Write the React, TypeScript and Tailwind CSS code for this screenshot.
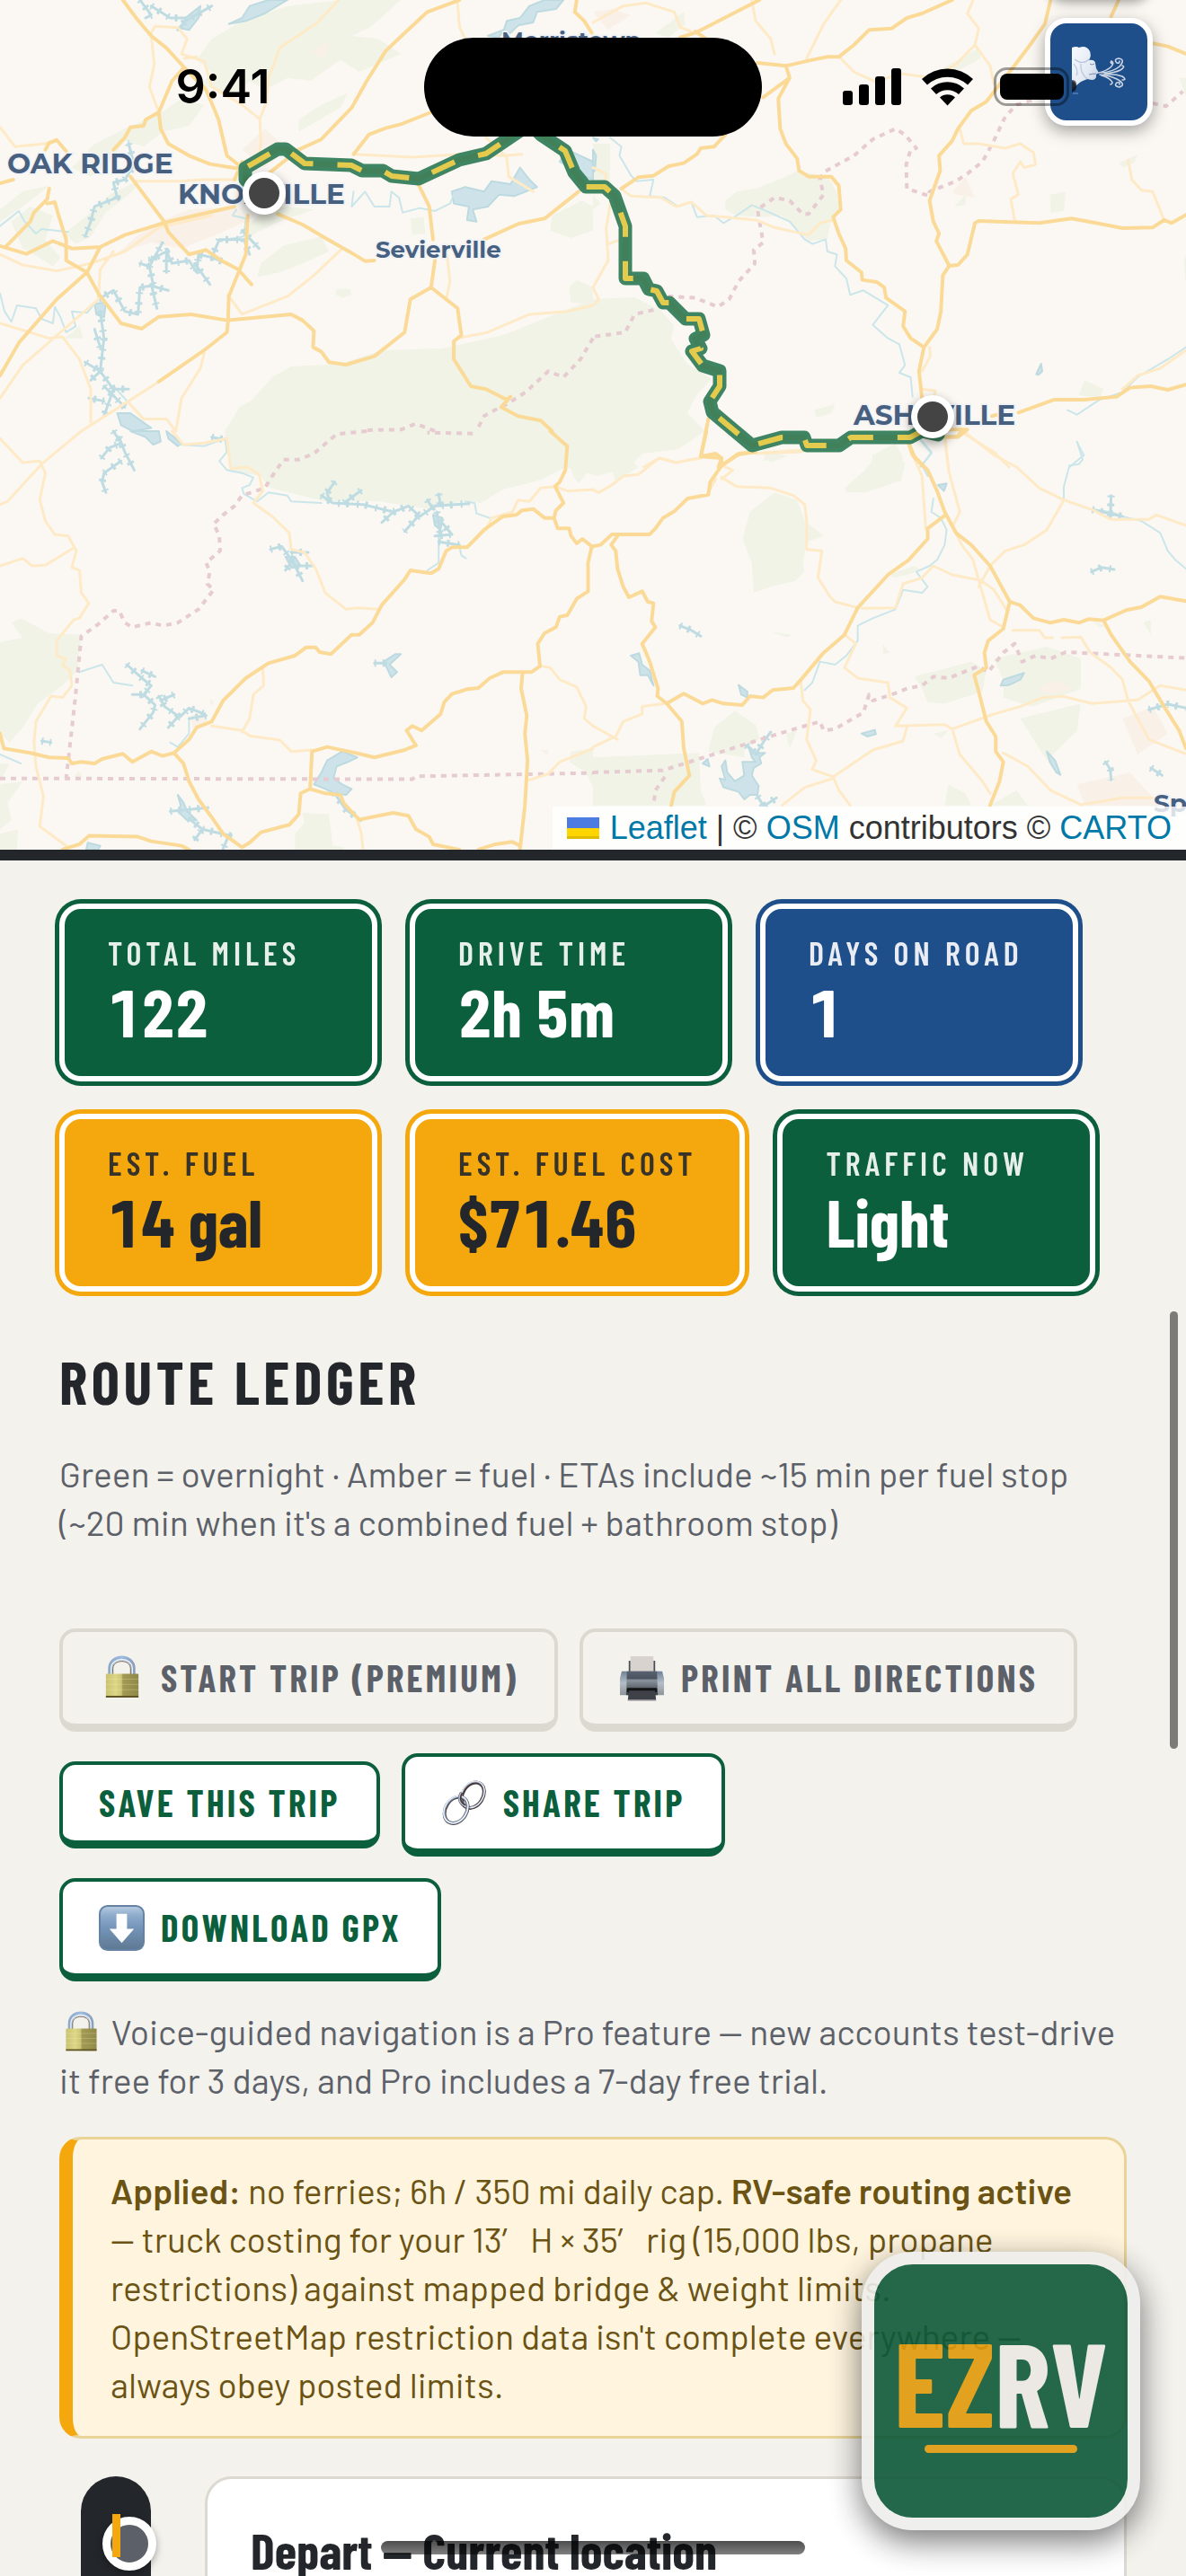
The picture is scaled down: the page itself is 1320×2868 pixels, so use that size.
import React from 'react';
import type { ReactNode } from 'react';

/* ---------- Map ---------- */

type Sheet = {
  at: string;
  parks: string;
  towns?: string;
  lakes: string;
  rivers: string;
  inlets: string;
  minor: string;
  major: string;
  border: string;
};

const NW: Sheet = {
  at: 'scale(0.4209 0.3333)',
  parks:
    'M560,130 L640,70 760,20 900,0 1060,0 980,90 930,120 1000,130 1060,180 950,240 900,200 820,270 760,260 700,300 660,270 620,330 560,290 500,330 560,240 520,200Z M190,560 L250,480 330,430 420,380 480,330 540,350 500,420 430,440 380,490 330,470 290,540 240,590Z M30,740 L80,690 140,720 120,800 160,860 140,890 90,850 60,830Z M170,780 L230,720 290,650 370,600 350,640 280,710 240,790 200,815Z M650,760 L700,700 760,690 830,700 720,750 660,790Z M690,880 L750,820 850,790 870,840 800,880 740,910 680,925Z M1460,720 L1540,670 1568,690 1568,770 1510,795 1455,770Z M890,965 L925,965 930,985 905,995 888,985Z M1505,960 L1525,935 1568,960 1568,1015 1510,1010Z M1085,730 L1120,725 1125,780 1090,785Z M790,400 L850,350 920,310 900,360 830,410 790,440Z M0,700 L60,640 130,620 60,690 0,740Z M170,1130 L210,1090 220,1130Z',
  towns:
    'M420,740 L500,700 620,690 650,740 560,790 480,830 400,810 350,830 300,860 360,790Z M640,500 L700,430 760,500 700,560Z M820,170 L870,140 860,200Z',
  lakes:
    'M1195,640 L1230,625 1280,640 1300,605 1350,615 1375,560 1400,600 1420,625 1360,655 1320,650 1290,690 1250,700 1260,740 1235,735 1240,690 1200,680Z M1330,110 L1340,70 1375,60 1400,20 1440,0 1490,0 1470,30 1420,40 1410,75 1370,85 1350,110Z M1480,540 L1500,500 1568,540 1568,600 1540,585Z M1290,120 L1330,100 1320,125Z M640,60 L660,20 710,0 760,0 700,45 650,70 605,80Z M490,60 L530,20 525,60 500,100 480,95Z M310,1380 L345,1380 400,1430 350,1440 320,1420Z M250,1015 L280,1010 275,1060 255,1050Z',
  rivers:
    'M0,980 L12,1040 30,1075 45,1020 95,1030 110,1065 140,1080 145,1025 160,1060 175,1110 200,1090 190,1040 230,1045 260,1000 M935,640 L930,690 965,640 990,690 1030,690 1035,640 1055,660 1065,710 1110,695 1150,705 1190,680 1200,650 M0,755 L50,705 65,740 95,780 110,765 180,775 M600,800 L645,790 650,730 615,720 625,700 M340,470 L345,510 M340,1345 L300,1290',
  inlets:
    'M260,1000 L300,970 330,1040 365,1050 370,960 400,955 445,970 M400,950 L415,1030 M405,950 L395,890 370,880 M395,890 L430,810 M395,870 L440,840 455,880 500,870 520,910 525,850 560,860 580,800 640,800 M440,840 L440,910 M560,860 L600,880 M515,880 L555,950 M265,1040 L275,1130 265,1240 225,1210 M265,1240 L240,1270 M265,1160 L250,1100 M265,1240 L300,1300 275,1390 M300,1300 L340,1300 M275,1340 L235,1330 M275,1290 L330,1360 M340,480 L355,550 330,600 300,610 310,660 250,690 240,740 225,790 M370,0 L400,50 385,60 M400,20 L450,60 490,60 M470,100 L490,70 560,20 M640,770 L685,830 M645,800 L660,850',
  minor:
    'M400,110 L410,88 470,92 495,130 480,180 540,205 560,290 640,350 687,398 690,480 680,540 M400,120 L408,215 395,290 420,375 M895,0 L840,75 740,160 710,260 705,340 687,398 M0,425 L40,490 120,480 150,465 M360,605 L470,605 540,600 625,600 M935,515 L1090,525 1230,515 1330,520 1380,515 M0,850 L60,885 150,905 240,880 330,840 420,760 560,720 M0,1330 L60,1220 160,1110 260,1000 265,900 300,840 M0,1080 L130,1130 165,1125 210,1200 240,1300 240,1410 M215,1440 L340,1340 420,1275 M905,830 L830,920 760,990 640,1050 603,985 M540,1180 L530,1230 480,1330 465,1440 M340,1345 L380,1400 440,1400 465,1440 M1210,1130 L1290,1110 1400,1050 1500,1040 1568,1020 M1180,830 L1190,940 1180,1000 M1210,10 L1215,90 1230,130 M1285,460 L1340,525 1345,590 1410,640 M487,195 L520,190',
  major:
    'M325,0 L360,60 400,120 440,160 487,225 545,300 565,360 578,400 600,520 640,560 M487,225 L455,270 420,375 385,400 380,420 345,425 330,460 300,500 M420,375 L425,430 445,480 500,520 555,548 640,565 M1215,0 L1130,40 1070,110 1020,170 970,270 930,360 850,465 790,500 M1140,375 L1060,415 1020,428 975,450 935,515 M0,822 L70,848 140,805 190,830 265,825 330,785 440,742 620,690 M0,1255 L50,1145 150,1000 230,910 265,825 M120,500 L130,478 150,468 175,505 M0,612 L35,600 M80,740 L15,825 M130,630 L125,665 90,710 80,740 M125,680 L145,675 155,720 175,800 175,870 230,910 260,980 320,1080 375,1098 420,1058 505,1050 600,1070 770,1050 800,1070 830,1105 828,1160 850,1175 870,1210 915,1218 990,1190 1070,1110 1085,1000 1140,960 1150,870 M1108,620 L1135,690 1145,800 M1140,960 L1210,1030 1220,1120 1200,1140 1200,1200 1245,1290 1285,1300 1340,1335 1350,1325 1325,1360 1370,1390 1430,1405 1460,1440 M345,590 L435,742 445,775 500,850 545,835 585,870 630,900 665,950 M655,720 L650,850 605,990 603,1075 600,1110 540,1170 420,1275 M735,715 L800,750 860,795 930,845 965,872 990,870 M1280,800 L1370,748 1440,730 1530,640 M1525,0 L1520,40 1545,70 1565,110 M640,540 L620,600 M700,590 L790,500',
  border:
    'M1568,1130 L1535,1200 1490,1260 1450,1240 1390,1310 1340,1350 1300,1375 1280,1390 1260,1440 M1150,1440 L1100,1415 1060,1435 960,1437',
};

const NE: Sheet = {
  at: 'translate(660 0) scale(0.4209 0.3333)',
  parks:
    'M350,700 L350,670 380,640 430,630 510,590 540,570 620,590 645,640 650,700 630,730 620,800 570,805 540,770 500,720 440,725 380,720Z M950,210 L1020,160 1025,195 960,240 900,245Z M165,110 L240,40 245,80 200,125Z M1210,650 L1250,640 1245,705 1210,710Z M955,690 L985,650 985,685Z M585,1370 L640,1350 630,1380 590,1395Z M1285,1320 L1300,1270 1350,1300 1340,1330Z M0,480 L45,480 45,610 0,600Z M1390,545 L1440,515 1430,545 1400,560Z M450,1540 L460,1505 515,1525Z M735,1560 L740,1520 800,1480 820,1530 810,1560Z M1562,880 L1568,850 1568,950Z M1550,260 L1568,260 1568,320Z M0,650 L20,680 0,700Z',
  towns: 'M950,640 L985,590 1010,660 960,650Z M0,40 L50,30 100,50 40,100Z',
  lakes: 'M1172,1250 L1185,1215 1188,1240 1178,1252Z M0,500 L8,520 5,570 0,575Z M0,460 L14,465 8,472Z',
  rivers:
    'M45,460 L75,490 70,520 100,585 115,605 160,600 150,655 190,660 225,690 260,675 275,725 320,720 345,745 380,720 420,685 450,700 485,720 520,740 560,800 580,815 615,800 620,840 645,850 640,890 670,930 680,985 715,970 780,1020 740,1085 780,1130 810,1150 825,1220 810,1245 840,1260 845,1325 M1568,1160 L1520,1200 1500,1215 1440,1260 1400,1310 1340,1335 1280,1385 1255,1370 M1280,1478 L1298,1520 1260,1560 M865,1470 L895,1515 865,1560',
  inlets: '',
  minor:
    'M0,75 L80,20 140,10 215,40 230,90 260,105 M420,0 L430,70 470,130 480,180 M655,0 L610,80 565,195 M655,195 L690,240 750,275 810,245 900,260 960,215 1010,150 1020,95 990,45 1005,0 M1010,150 L1050,220 1060,280 M970,430 L980,480 1020,480 1090,495 1130,480 1165,510 1170,550 1140,560 1130,540 1110,580 1125,650 1105,665 1115,735 M1415,535 L1425,600 1450,635 1480,640 1510,735 M75,630 L100,655 180,660 220,690 260,675 300,720 350,725 430,735 480,760 570,785 600,745 635,735 M50,650 L35,760 40,870 0,960 L15,1000 5,1015 M40,815 L75,800 M870,1300 L905,1305 900,1350 M890,1160 L892,1190 870,1240 M1400,1300 L1440,1255 1500,1230 1568,1170 M135,1560 L175,1530 220,1545 280,1530 M450,1512 L540,1505 600,1495 M0,560 L35,580 30,620 M930,1470 L940,1560 M970,1440 L1060,1510 1100,1560',
  major:
    'M440,0 L270,110 230,125 M270,105 L300,130 M435,210 L510,220 580,200 620,190 650,190 690,150 730,100 790,95 830,60 870,45 950,0 M510,220 L520,260 490,330 495,430 510,480 540,530 545,570 570,590 630,590 650,620 655,700 635,725 650,780 668,830 670,870 710,910 712,935 750,942 770,960 775,995 825,1040 820,1090 840,1130 875,1160 M520,260 L450,325 M350,450 L320,490 285,495 275,515 240,545 200,555 160,587 120,592 75,630 M1210,0 L1195,80 1150,160 1120,210 1070,290 1040,340 1000,370 965,430 950,470 915,520 918,570 890,670 900,740 915,780 908,805 942,888 925,920 920,1040 910,1100 875,1160 862,1240 870,1330 M942,888 L965,885 990,850 1010,745 1020,738 1180,745 1265,730 1330,745 1400,762 1480,760 1510,735 1530,745 1568,718 M1480,145 L1520,155 1568,180 M1390,0 L1370,55 M1125,1378 L1220,1335 1300,1335 1385,1325 1420,1295 1475,1290 1520,1302 1568,1285 M835,1480 L845,1520 875,1560 M305,1400 L285,1525 340,1530 332,1560 M425,1510 L385,1518 340,1555 M940,1435 L990,1435 965,1460 930,1460 M1055,1390 L1070,1385',
  border:
    'M1160,335 L1120,350 1090,390 1060,470 1030,540 990,580 960,605 890,640 890,655 830,630 828,550 840,500 855,495 825,450 800,430 740,465 690,520 610,575 600,600 610,650 570,715 555,715 520,670 480,660 435,700 450,810 425,835 428,880 385,940 360,1000 330,1025 270,995 200,990 M160,1035 L110,1050 85,1110 0,1125 M1480,345 L1515,355 1560,305',
};

const SW: Sheet = {
  at: 'translate(0 480) scale(0.4209 0.3333)',
  parks:
    'M0,705 L60,690 30,640 55,625 130,675 215,680 205,800 165,850 100,910 60,990 25,1040 0,1010Z M780,1398 L780,1345 805,1310 800,1275 870,1280 880,1385 910,1390 910,1398Z M1510,1070 L1568,1060 1568,1190 1550,1140 1505,1105Z M0,1180 L60,1170 20,1240 30,1300 0,1330Z M0,1345 L48,1330 45,1398 0,1398Z M195,1155 L208,1135 218,1155Z M1500,80 L1540,100 1568,0 1568,115 1530,175 1515,150Z M0,1110 L25,1110 0,1170Z',
  towns: 'M505,950 L540,940 550,975 510,1000Z M555,895 L565,900 562,915 555,912Z M1430,1065 L1450,1065 1450,1085Z',
  lakes:
    'M905,1070 L945,1090 920,1105 890,1120 882,1160 905,1180 930,1195 915,1215 885,1210 860,1195 830,1180 850,1140 865,1100 885,1085Z M345,0 L420,0 425,35 405,45 385,20Z M470,1215 L485,1240 495,1270 520,1300 495,1300 470,1270 478,1250Z M440,0 L480,40 470,50 445,25Z M228,1398 L232,1375 265,1385 260,1398Z M755,420 L780,420 795,450 770,455Z M1145,280 L1170,290 1165,330 1150,315Z M1015,770 L1045,745 1060,745 1030,780 1050,805 1035,822Z',
  rivers:
    'M475,45 L540,50 595,25 600,70 580,100 600,130 640,140 670,155 660,180 640,190 645,210 680,235 710,205 760,215 770,235 850,240 M1160,340 L1160,440 1130,465 M1230,235 L1255,240 1260,275 1295,290 M1215,385 L1220,415 1232,425 M210,805 L270,780 290,820 300,840 350,850 M500,960 L500,1010 470,1055 450,1040 M0,1080 L55,1110',
  inlets:
    'M300,0 L320,40 290,55 268,90 M315,20 L330,70 355,130 M320,100 L275,140 270,170 280,205 M850,215 L880,240 960,245 1040,270 1080,250 1110,285 1150,250 1240,242 M870,230 L865,205 885,170 M910,240 L955,198 M1160,210 L1165,250 M1130,230 L1145,260 M1040,270 L1010,305 M1105,285 L1070,335 M1155,270 L1165,350 M1160,370 L1215,380 M1165,300 L1195,345 1150,350 M715,395 L745,385 765,420 780,450 830,450 M775,430 L755,465 M780,450 L800,500 M770,405 L815,405 M990,775 L1022,775 M335,780 L375,825 400,850 380,880 350,880 M375,800 L410,820 M380,880 L410,915 405,940 370,995 M420,885 L435,920 475,955 500,925 540,945 M460,880 L425,900 M470,955 L445,990 M545,950 L500,960 M110,1035 L135,1040 M500,1295 L535,1330 515,1365 M450,1270 L550,1258 M535,1330 L605,1350 590,1395 M885,1210 L915,1265 955,1300 M560,20 L600,30',
  minor:
    'M215,0 L110,110 20,235 0,245 M0,25 L60,105 105,100 120,140 105,230 120,300 145,345 180,350 202,400 190,455 210,465 215,540 235,575 210,625 195,630 150,700 150,750 175,760 165,780 185,800 190,850 165,890 135,885 95,970 90,1040 95,1120 115,1220 105,1320 180,1390 M0,450 L60,425 85,450 120,448 195,390 M455,0 L485,45 540,40 600,25 610,125 655,120 685,145 695,200 670,240 720,285 765,340 770,395 805,405 835,460 860,540 915,595 945,590 1000,595 M695,790 L697,850 670,880 660,960 640,1005 M560,985 L640,1000 660,1018 740,1032 770,1070 825,1065 M1568,195 L1500,200 1470,185 1430,190 1400,235 1370,230 1355,270 1300,290 1285,330 M1430,785 L1455,790 1480,830 1525,855 1550,920 1545,960 1568,985 M1400,1165 L1450,1145 1480,1105 1568,1060 M945,1300 L955,1340 960,1398',
  major:
    'M1455,0 L1500,50 1495,130 1480,170 1468,185 1490,240 1470,265 1465,290 M460,1075 L500,1030 520,990 560,970 590,900 650,825 710,775 780,750 810,722 835,722 845,738 875,745 930,680 950,680 985,640 1010,580 1070,495 1085,465 1140,475 1160,460 1180,400 1195,388 1235,388 1280,330 1330,285 1365,280 1380,265 1410,260 1440,290 1465,290 1475,325 1505,325 1510,350 1525,375 1540,360 1565,385 1555,440 1555,535 1525,560 1500,615 1480,620 1470,655 1440,675 1422,710 1428,785 1405,805 1330,805 1295,825 1265,858 1235,862 1195,878 1175,905 1165,945 1115,1000 1090,985 1075,1000 1100,1050 1070,1065 990,1090 940,1075 865,1055 825,1070 820,1195 860,1210 900,1215 910,1245 950,1298 1000,1285 1040,1275 1080,1285 1100,1330 1135,1355 1145,1380 1215,1398 M0,1010 L10,1060 80,1075 130,1090 180,1092 190,1110 215,1105 250,1110 270,1095 325,1078 350,1105 400,1070 430,1085 460,1075 485,1110 500,1170 525,1230 560,1290 590,1345 640,1390 660,1375 690,1340 765,1315 790,1280 795,1210 820,1195 M165,1398 L210,1380 235,1352 365,1355 400,1370 480,1385 500,1398 M1382,805 L1378,860 1393,950 1388,1010 1395,1100 1388,1250 1375,1398 M1265,1398 L1310,1380 1355,1372 1375,1385',
  border:
    'M1250,8 L1130,5 M970,0 L890,10 830,75 790,95 750,95 720,150 700,190 640,215 620,250 590,280 565,310 580,350 582,400 545,440 555,470 548,510 565,530 525,595 470,640 430,650 400,640 350,655 330,640 315,600 300,600 260,645 215,685 200,880 185,1050 175,1160 M0,1160 L1090,1163 1100,1153 1568,1142',
};

const SE: Sheet = {
  at: 'translate(660 480) scale(0.4209 0.3333)',
  parks:
    'M0,20 L130,0 130,50 90,80 120,120 60,170 50,130 0,140Z M665,190 L720,130 740,95 800,65 825,110 815,165 720,205 670,205Z M395,360 L415,270 480,205 540,230 560,300 612,350 565,370 555,440 558,470 535,500 470,520 425,540 420,440Z M850,820 L1000,770 1040,800 1030,870 930,910 885,905 870,860Z M1060,760 L1200,720 1290,760 1290,860 1240,885 1160,920 1085,890 1085,830Z M305,1070 L320,990 375,935 430,980 440,1030 400,1060 400,1090Z M0,1090 L85,1085 280,1075 285,1200 300,1250 0,1250Z M780,480 L850,450 870,465 800,490Z M510,1010 L540,1000 520,1060Z M930,1250 L940,1180 985,1210 1000,1250Z M1050,1250 L1120,1200 1150,1250Z M1455,640 L1475,630 1475,680Z M765,710 L785,740 768,745Z M470,670 L525,680 515,690Z M450,80 L510,85 470,105Z M1130,960 L1290,910 1280,1000 1200,1100 1150,1000Z M900,1010 L940,1000 920,1025Z M1320,635 L1370,655 1340,655Z',
  towns: 'M1180,860 L1220,830 1270,860 1200,880Z M1400,960 L1480,920 1520,1010 1440,1080Z M1280,1180 L1420,1140 1500,1250 1300,1250Z',
  lakes:
    'M400,1150 L395,1105 430,1105 420,1090 410,1050 430,1075 455,1075 440,1090 445,1110 425,1125 420,1150 438,1185 435,1215 415,1215 400,1230 385,1205 345,1190 335,1160 350,1165 340,1120 350,1100 355,1140 375,1170Z M1078,850 L1085,830 1140,808 1130,830 1100,848Z M1200,1070 L1222,1100 1236,1148 1225,1140 1208,1105Z M710,1010 L745,998 748,1012 725,1020Z M290,1110 L303,1095 308,1120Z M100,750 L122,742 130,780 150,800 160,850 145,815 125,815 120,770Z M385,848 L408,870 408,890 392,880Z M912,180 L935,175 928,200Z',
  rivers:
    'M865,25 L895,70 870,115 885,150 M900,225 L895,270 920,290 935,330 930,380 910,430 890,450 855,470 885,520 870,540 820,530 800,595 740,625 715,640 700,650 700,700 670,750 640,780 600,770 580,840 560,865 M1280,35 L1295,95 1285,110 1260,115 1245,185 1245,230 1310,260 1370,270 1400,285 1450,300 1475,320 1500,340 1520,400 1540,430 1568,460',
  inlets:
    'M1370,215 L1368,290 M1320,262 L1400,285 M230,650 L260,665 285,685 M430,1080 L450,1040 470,1005 M405,1050 L430,1075 M435,1220 L450,1250 M455,1250 L485,1225 M1355,1105 L1368,1130 1370,1165 M1475,1125 L1505,1150 M1470,930 L1520,912 1568,925 M1318,470 L1345,455 1378,462',
  minor:
    'M0,195 L15,205 50,180 80,150 120,145 175,90 220,105 285,90 M430,75 L540,70 620,55 M340,155 L380,185 470,190 530,215 560,245 565,300 565,395 605,400 595,490 625,550 640,570 700,590 M340,115 L370,130 340,160 M835,50 L870,150 880,325 M930,0 L940,130 970,270 950,320 975,380 1005,430 1025,520 1050,630 1085,655 M1110,665 L1180,665 1195,690 1215,690 M1240,690 L1290,688 1315,740 1370,790 1400,830 1415,900 1440,960 1470,1030 1568,1078 M980,0 L1060,80 1120,120 1180,190 1245,230 1200,330 1140,380 1090,400 1050,450 1020,520 M1245,230 L1320,262 1370,295 1470,295 1490,280 1568,315 M900,450 L950,480 1025,498 1060,530 1095,600 M900,450 L870,490 820,510 800,590 710,592 M665,680 L695,710 665,790 700,825 780,840 785,890 830,925 800,985 930,980 950,995 1060,945 1130,920 1190,890 1240,885 1320,910 1440,898 1500,850 1568,865 M550,840 L555,900 575,930 565,1030 590,1100 580,1130 635,1155 650,1200 680,1250 M635,1155 L740,1065 820,1035 830,990 M635,1160 L560,1190 500,1250 M950,995 L970,1080 1030,1170 1050,1210 M1085,1075 L1150,1120 1210,1200 1290,1248 1400,1225 1480,1225 M0,1055 L60,1020 80,970 130,945 130,920 190,910 M0,985 L65,1030 M325,160 L300,215',
  major:
    'M0,385 L20,380 50,345 150,345 165,325 185,290 215,268 250,225 305,212 310,170 340,115 385,75 430,70 M300,0 L285,85 325,75 340,90 340,115 M65,350 L48,380 60,400 65,460 80,520 95,555 130,535 145,570 160,575 155,635 165,655 130,710 150,770 172,860 170,885 195,910 235,970 240,1060 255,1150 215,1205 207,1250 M195,910 L240,877 290,910 315,898 345,910 395,915 415,885 450,890 475,865 530,858 550,830 610,740 665,680 700,590 780,480 835,430 885,360 885,325 932,280 M835,40 L850,85 885,130 910,200 930,270 960,340 1000,380 1050,450 1102,570 1130,582 1165,625 1210,640 1245,630 1285,640 1310,628 1350,632 1385,612 1410,598 1450,588 1500,553 1568,568 M1102,570 L1085,660 1045,700 1035,740 1040,790 1008,815 1020,870 1040,970 1065,1020 1065,1070 1085,1105 1075,1170 1050,1250 M1350,632 L1370,680 1420,770 1470,835 1510,920 1550,1000 1568,1060 M975,0 L965,18 940,20',
  border:
    'M0,1140 L185,1133 480,1015 600,970 610,1000 640,995 715,940 730,880 740,900 790,880 830,860 870,850 900,820 940,825 1020,785 1045,805 1085,740 1115,710 1135,770 1170,750 1210,760 1250,738 1568,758 M190,1155 L165,1200 160,1250',
};

const SHEETS = [NW, NE, SW, SE];

const FOREST =
  'M250,480 267,453 280,446 303,420 324,408 379,405 425,390 492,388 560,373 660,333 706,331 735,345 750,362 747,378 765,405 792,422 775,440 765,460 785,480 755,500 715,505 700,520 665,530 630,520 600,535 560,545 535,560 520,557 480,567 420,558 360,558 300,543 290,530 258,525 252,500Z';

const ROUTE =
  'M286,210 L273,200 273,187 309,166 318,166 339,182 391,184 403,190 426,190 436,196 466,199 511,178 541,171 572,150 590,138 602,150 629,168 639,192 652,208 673,208 684,218 696,252 696,310 716,310 722,322 731,324 738,337 745,337 763,355 778,355 783,373 774,377 780,388 770,391 782,407 801,413 801,430 790,447 793,459 837,496 870,487 895,487 898,496 934,496 947,487 1013,487 1026,480 1044,484';

function Stop({ x, y }: { x: number; y: number }) {
  return (
    <g>
      <circle cx={x} cy={y + 5} r="25" fill="#000" opacity="0.35" filter="url(#soft)" />
      <circle cx={x} cy={y} r="24" fill="#fff" />
      <circle cx={x} cy={y} r="17" fill="#444" />
    </g>
  );
}

function Place({ x, y, size, children }: { x: number; y: number; size: number; children: string }) {
  return (
    <text
      x={x}
      y={y}
      fontSize={size}
      fontWeight="700"
      fill="#47607f"
      stroke="#eef1f6"
      strokeWidth="3"
      paintOrder="stroke"
      className="font-['Montserrat','Open_Sans',sans-serif]"
    >
      {children}
    </text>
  );
}

function RouteMap() {
  return (
    <svg viewBox="0 0 1320 946" className="block h-auto w-full bg-[#fbf8f3]" role="img" aria-label="Route map from Knoxville to Asheville">
      <defs>
        <filter id="soft" x="-50%" y="-50%" width="200%" height="200%">
          <feGaussianBlur stdDeviation="6" />
        </filter>
      </defs>
      <path d={FOREST} fill="#f0f3e6" />
      {SHEETS.map((s) => (
        <g key={s.at} transform={s.at}>
          <path d={s.parks} fill="#f0f3e6" />
          {s.towns && <path d={s.towns} fill="#f9f0e8" />}
        </g>
      ))}
      <g fill="none" strokeLinejoin="round" strokeLinecap="round">
        {SHEETS.map((s) => (
          <g key={s.at} transform={s.at}>
            <path d={s.lakes} fill="#cde3e9" stroke="#bddae0" strokeWidth="2" vectorEffect="non-scaling-stroke" />
            <path d={s.rivers} stroke="#cbe6ea" strokeWidth="2" vectorEffect="non-scaling-stroke" />
            <path d={s.inlets} stroke="#bfdce2" strokeWidth="3" vectorEffect="non-scaling-stroke" />
            <path d={s.inlets} stroke="#bfdce2" strokeWidth="8" strokeDasharray="2 7 3 9" strokeLinecap="butt" vectorEffect="non-scaling-stroke" />
          </g>
        ))}
        {SHEETS.map((s) => (
          <path key={s.at} transform={s.at} d={s.border} stroke="#e6cbd1" strokeWidth="4" strokeDasharray="6 6" strokeLinecap="butt" vectorEffect="non-scaling-stroke" />
        ))}
        {SHEETS.map((s) => (
          <path key={s.at} transform={s.at} d={s.minor} stroke="#feeac6" strokeWidth="3" vectorEffect="non-scaling-stroke" />
        ))}
        {SHEETS.map((s) => (
          <path key={s.at} transform={s.at} d={s.major} stroke="#fbda97" strokeWidth="4" vectorEffect="non-scaling-stroke" />
        ))}
      </g>
      <Place x={558} y={54} size={26}>Morristown</Place>
      <Place x={8} y={193} size={31}>OAK RIDGE</Place>
      <Place x={198} y={227} size={31}>KNOXVILLE</Place>
      <Place x={418} y={287} size={26}>Sevierville</Place>
      <Place x={950} y={473} size={31}>ASHEVILLE</Place>
      <Place x={1284} y={904} size={28}>Sp</Place>
      <g fill="none" strokeLinejoin="round">
        <path d={ROUTE} stroke="#3f8563" strokeWidth="15" strokeLinecap="round" />
        <path d={ROUTE} stroke="#418058" strokeWidth="6" />
        <path d={ROUTE} stroke="#e5cb4d" strokeWidth="6" strokeDasharray="28 27" strokeDashoffset="22" />
      </g>
      <Stop x={294} y={215} />
      <Stop x={1038} y={464} />
    </svg>
  );
}

/* ---------- Icons ---------- */

function LockIcon({ className }: { className: string }) {
  return (
    <svg viewBox="0 0 52 52" className={className} aria-hidden="true">
      <defs>
        <linearGradient id="brass" x1="0" x2="1" y1="0" y2="0">
          <stop offset="0" stopColor="#c9c272" />
          <stop offset="0.3" stopColor="#dcd688" />
          <stop offset="0.48" stopColor="#cbc474" />
          <stop offset="0.52" stopColor="#a39a55" />
          <stop offset="1" stopColor="#8f8848" />
        </linearGradient>
        <linearGradient id="steel" x1="0" x2="1" y1="0" y2="0">
          <stop offset="0" stopColor="#8fa9c8" />
          <stop offset="0.5" stopColor="#9bbbe0" />
          <stop offset="1" stopColor="#8aa0bd" />
        </linearGradient>
      </defs>
      <path d="M13,26 V15 C13,-1 39,-1 39,15 V26" fill="none" stroke="url(#steel)" strokeWidth="5" />
      <path d="M14,25 V15 C14,1 38,1 38,15 V25" fill="none" stroke="#e9f1fb" strokeWidth="1.5" />
      <path d="M16,23 V15 C16,4 36,4 36,15 V23" fill="none" stroke="#6b5f4c" strokeWidth="1" />
      <rect x="8" y="21" width="37" height="27" rx="1" fill="url(#brass)" />
      <path d="M8,27 H45 M8,33 H45 M8,39 H45" stroke="#fff8b8" strokeOpacity="0.25" strokeWidth="1" />
      <path d="M8,47 H45" stroke="#5e5426" strokeWidth="2" />
    </svg>
  );
}

function PrinterIcon({ className }: { className: string }) {
  return (
    <svg viewBox="0 0 52 52" className={className} aria-hidden="true">
      <defs>
        <linearGradient id="shell" x1="0" x2="0" y1="0" y2="1">
          <stop offset="0" stopColor="#58626f" />
          <stop offset="0.3" stopColor="#4b535e" />
          <stop offset="0.38" stopColor="#8a949e" />
          <stop offset="0.7" stopColor="#5f666e" />
          <stop offset="1" stopColor="#3a3e44" />
        </linearGradient>
        <linearGradient id="flank" x1="0" x2="0" y1="0" y2="1">
          <stop offset="0" stopColor="#6f8197" />
          <stop offset="0.5" stopColor="#b4bec8" />
          <stop offset="1" stopColor="#8d9499" />
        </linearGradient>
      </defs>
      <path d="M11,6 H13 V19 H11Z M39,6 H41 V19 H39Z" fill="#4a4e54" />
      <rect x="13" y="1" width="26" height="19" fill="#d8d3cf" />
      <path d="M3,18 H49 L51,26 V45 H1 V26Z" fill="url(#flank)" />
      <path d="M9,18 H43 L44,45 H8Z" fill="url(#shell)" />
      <rect x="9" y="37" width="34" height="5" rx="1" fill="#121416" />
      <path d="M11,40 H41 L42,51 H10Z" fill="#3e4147" />
      <path d="M10,51 H42" stroke="#a9a3a8" strokeWidth="1.5" />
    </svg>
  );
}

function ChainIcon({ className }: { className: string }) {
  return (
    <svg viewBox="0 0 52 52" className={className} aria-hidden="true">
      <g fill="none">
        <g transform="rotate(32 36 17)">
          <ellipse cx="36" cy="17" rx="11.5" ry="15.5" stroke="#453638" strokeWidth="4" />
          <ellipse cx="35.4" cy="16.6" rx="12" ry="15.8" stroke="#a5b4c8" strokeWidth="2" />
          <ellipse cx="35.2" cy="16.4" rx="12.4" ry="16" stroke="#eef4fb" strokeWidth="1" />
        </g>
        <g transform="rotate(32 17 34)">
          <ellipse cx="17" cy="34" rx="12" ry="16" stroke="#50484c" strokeWidth="4" />
          <ellipse cx="16.5" cy="33.7" rx="12.3" ry="16.2" stroke="#9fb7d4" strokeWidth="2.5" />
          <ellipse cx="16.3" cy="33.5" rx="12.6" ry="16.4" stroke="#f4f8fd" strokeWidth="1.2" />
        </g>
        <path d="M23,14 Q18,23 26,29" stroke="#453638" strokeWidth="3.5" />
        <path d="M22.500,14 Q17,23 25.500,29" stroke="#b4c2d4" strokeWidth="1.5" />
      </g>
    </svg>
  );
}

function DownIcon({ className }: { className: string }) {
  return (
    <svg viewBox="0 0 52 52" className={className} aria-hidden="true">
      <defs>
        <linearGradient id="tile" x1="0" x2="0" y1="0" y2="1">
          <stop offset="0" stopColor="#b9cde2" />
          <stop offset="0.22" stopColor="#8dabcb" />
          <stop offset="0.5" stopColor="#7494b8" />
          <stop offset="1" stopColor="#5d7891" />
        </linearGradient>
      </defs>
      <rect x="1" y="1" width="50" height="50" rx="9" fill="url(#tile)" stroke="#6382a4" strokeWidth="2" />
      <path d="M20,10 H32 V27 H40 L26,43 12,27 H20Z" fill="#fff" />
    </svg>
  );
}

function WindFaceIcon() {
  return (
    <svg viewBox="0 0 61 58" className="h-[58px] w-[61px]" aria-hidden="true">
      <defs>
        <linearGradient id="cloud" x1="0" x2="1" y1="0" y2="1">
          <stop offset="0" stopColor="#f7f9fd" />
          <stop offset="0.6" stopColor="#e3e9f3" />
          <stop offset="1" stopColor="#b7c3d8" />
        </linearGradient>
      </defs>
      <path d="M0,2 Q5,0 8,2 Q16,-1 20,6 Q22,12 19,16 Q25,15 26,19 L27,25 L30,30 L27,32 Q28,38 22,38 L17,37 L10,40 L0,48Z" fill="url(#cloud)" />
      <path d="M3,15 Q12,22 19,15 M2,20 Q8,28 5,33 M10,20 Q9,30 17,37" fill="none" stroke="#b9c5dc" strokeWidth="1.2" />
      <path d="M20,20 Q22,22 25,20 M19,32 Q23,31 27,31" fill="none" stroke="#7d8da8" strokeWidth="1" />
      <path d="M0,38 Q5,38 5,43 Q4,49 0,51Z" fill="#39424f" opacity="0.8" />
      <path d="M1,53 H7" stroke="#4673ab" strokeWidth="2" />
      <g fill="none" stroke="#cbd5e4" strokeWidth="1.6" strokeLinecap="round">
        <path d="M30,30 Q38,28 43,24 Q48,19 44,17 Q42,19 45,20" />
        <path d="M33,30 Q46,29 53,23 Q60,15 52,14 Q46,15 50,19 Q53,20 53,17" />
        <path d="M36,31 Q48,30 54,27 Q60,23 56,22" />
        <path d="M36,32 Q48,31 56,34 Q62,38 56,38" />
        <path d="M31,32 Q42,33 50,37 Q61,43 53,46 Q46,45 50,41 Q54,40 53,43" />
        <path d="M33,33 Q40,35 43,38 Q47,42 43,43" />
      </g>
    </svg>
  );
}

/* ---------- Status bar ---------- */

function StatusBar() {
  return (
    <div className="absolute inset-x-0 top-0 z-20 grid grid-cols-[1fr_376px_1fr] items-center pt-[42px]">
      <span className="pl-6 text-center font-['Inter',sans-serif] text-[52px] leading-[64px] font-semibold text-black">9:41</span>
      <div className="h-[110px] rounded-full bg-black" />
      <div className="flex items-center justify-center pr-8">
        <svg viewBox="0 0 260 44" className="h-[44px] w-[260px]" role="img" aria-label="Signal, Wi-Fi and battery">
          <rect x="0" y="26" width="11" height="16" rx="3" />
          <rect x="18" y="19" width="11" height="23" rx="3" />
          <rect x="36" y="10" width="11" height="32" rx="3" />
          <rect x="54" y="1" width="11" height="41" rx="3" />
          <path d="M88,13 A41,41 0 0 1 145,13 L139,19.500 A33,33 0 0 0 94,19.500Z" />
          <path d="M98,23.500 A27,27 0 0 1 135,23.500 L129,30 A19,19 0 0 0 104,30Z" />
          <path d="M108,33.500 A13,13 0 0 1 125,33.500 L116.500,42.500Z" />
          <rect x="169.500" y="1.500" width="81" height="40" rx="13" fill="none" stroke="#000" strokeOpacity="0.38" strokeWidth="3" />
          <rect x="175" y="7" width="71" height="29" rx="8" />
          <path d="M255,15 Q260,17 260,21.500 Q260,26 255,28Z" fillOpacity="0.6" />
        </svg>
      </div>
    </div>
  );
}

/* ---------- Panel parts ---------- */

const TONES = {
  green: 'bg-[#0b5f3c] text-white shadow-[0_0_0_5px_#0b5f3c]',
  blue: 'bg-[#1e4f8a] text-white shadow-[0_0_0_5px_#1e4f8a]',
  amber: 'bg-[#f5a80d] text-[#23272b] shadow-[0_0_0_5px_#f5a80d]',
};

function Stat({ label, value, tone }: { label: string; value: string; tone: keyof typeof TONES }) {
  return (
    <div className={`min-w-[354px] rounded-[24px] border-6 border-white px-12 pt-[22px] pb-[35px] font-['Barlow_Condensed','Roboto_Condensed',sans-serif] ${TONES[tone]}`}>
      <dt className="text-[36px] leading-[54px] font-semibold tracking-[0.14em] uppercase opacity-90">{label}</dt>
      <dd className="text-[75px] leading-[75px] font-bold tabular-nums">{value}</dd>
    </div>
  );
}

function ActionButton({ icon, muted, children }: { icon?: ReactNode; muted?: boolean; children: string }) {
  const tone = muted
    ? 'border-[#dcdad0] bg-[#f4f2ed] text-[#5c6169]'
    : 'border-[#0b5f3c] bg-white text-[#0b5f3c]';
  return (
    <button
      type="button"
      className={`flex items-center gap-[18px] rounded-[18px] border-4 border-b-9 px-10 py-[18px] font-['Barlow_Condensed','Roboto_Condensed',sans-serif] text-[41px] leading-[48px] font-bold tracking-[0.08em] uppercase ${tone}`}
    >
      {icon && <span className="flex h-[66px] items-center">{icon}</span>}
      {children}
    </button>
  );
}

export default function App() {
  return (
    <main className="relative h-screen overflow-hidden bg-[#f4f2ed] font-['Barlow','Roboto',sans-serif] text-[39px] leading-[54px] text-[#5c6169]">
      <header className="relative border-b-12 border-[#23262b]">
        <RouteMap />
        <div className="absolute top-[-120px] right-[37px] size-[120px] rounded-[24px] shadow-[0_3px_12px_rgba(0,0,0,0.35)]" />
        <button
          type="button"
          aria-label="Wind layer"
          className="absolute top-5 right-[37px] flex size-[120px] items-center justify-center rounded-[24px] border-6 border-white bg-[#1e4f8a] shadow-[0_6px_18px_rgba(0,0,0,0.35)]"
        >
          <WindFaceIcon />
        </button>
        <div className="absolute right-0 bottom-0 flex items-center gap-3 bg-white/80 px-4 font-['Liberation_Sans',sans-serif] text-[36px] leading-[48px] text-[#333333]">
          <svg viewBox="0 0 12 8" className="h-6 w-9" aria-hidden="true">
            <path fill="#4C7BE1" d="M0 0h12v4H0z" />
            <path fill="#FFD500" d="M0 4h12v3H0z" />
            <path fill="#E0BC00" d="M0 7h12v1H0z" />
          </svg>
          <p>
            <a href="#leaflet" className="text-[#0078a8]">Leaflet</a> | © <a href="#osm" className="text-[#0078a8]">OSM</a> contributors ©{' '}
            <a href="#carto" className="text-[#0078a8]">CARTO</a>
          </p>
        </div>
      </header>
      <StatusBar />

      <section className="px-[66px] pt-12">
        <dl className="flex flex-wrap gap-9">
          <Stat label="Total miles" value="122" tone="green" />
          <Stat label="Drive time" value="2h 5m" tone="green" />
          <Stat label="Days on road" value="1" tone="blue" />
          <Stat label="Est. fuel" value="14 gal" tone="amber" />
          <Stat label="Est. fuel cost" value="$71.46" tone="amber" />
          <Stat label="Traffic now" value="Light" tone="green" />
        </dl>

        <h2 className="mt-[60px] font-['Barlow_Condensed','Roboto_Condensed',sans-serif] text-[66px] leading-[80px] font-bold tracking-[0.07em] text-[#23262b] uppercase">
          Route ledger
        </h2>
        <p className="mt-9">
          Green = overnight · Amber = fuel · ETAs include ~15 min per fuel stop (~20 min when it's a combined fuel + bathroom stop)
        </p>

        <div className="mt-[91px] flex flex-wrap items-center gap-6 pr-6">
          <ActionButton muted icon={<LockIcon className="size-[51px]" />}>Start trip (Premium)</ActionButton>
          <ActionButton muted icon={<PrinterIcon className="size-[51px]" />}>Print all directions</ActionButton>
          <ActionButton>Save this trip</ActionButton>
          <ActionButton icon={<ChainIcon className="size-[51px]" />}>Share trip</ActionButton>
          <ActionButton icon={<DownIcon className="size-[51px]" />}>Download GPX</ActionButton>
        </div>

        <p className="mt-[29px]">
          <LockIcon className="mr-0.5 inline-block size-12 align-[-10px]" /> Voice-guided navigation is a Pro feature — new accounts test-drive it free for 3 days, and Pro includes a 7-day free trial.
        </p>

        <p className="mt-9 rounded-[24px] border-3 border-l-15 border-[#e9d396] border-l-[#f5a80d] bg-[#fff5df] px-[42px] py-[30px] text-[#6b5314]">
          <strong className="font-semibold">Applied:</strong> no ferries; 6h / 350 mi daily cap. <strong className="font-semibold">RV-safe routing active</strong> — truck costing for your 13′ H × 35′ rig (15,000 lbs, propane restrictions) against mapped bridge &amp; weight limits. OpenStreetMap restriction data isn't complete everywhere — always obey posted limits.
        </p>

        <div className="mt-[42px] grid grid-cols-[78px_1fr] gap-[60px] pl-6">
          <div className="relative h-[240px] rounded-t-[39px] bg-[#23262b]">
            <div className="absolute top-[45px] left-6 size-[60px] rounded-full border-9 border-white bg-[#5c6169] shadow-[0_3px_9px_rgba(0,0,0,0.35)]" />
            <div className="absolute top-[42px] left-[35px] h-12 w-[9px] bg-[#f5a80d]" />
          </div>
          <article className="rounded-[30px] border-3 border-[#dcdad0] bg-white px-12 pt-[45px]">
            <h3 className="font-['Barlow_Condensed','Roboto_Condensed',sans-serif] text-[56px] leading-[68px] font-bold text-[#23262b]">
              Depart — Current location
            </h3>
          </article>
        </div>
      </section>

      <div className="absolute top-[1460px] right-[9px] h-[487px] w-[9px] rounded-full bg-[#7b7c77]" />

      <button
        type="button"
        aria-label="EZRV menu"
        className="absolute right-[51px] bottom-[51px] size-[310px] rounded-[57px] border-14 border-[#eeeeec] bg-[#0d5839] opacity-90 shadow-[0_12px_36px_rgba(0,0,0,0.6)]"
      >
        <svg viewBox="0 0 282 282" className="block size-full" aria-hidden="true">
          <text x="141" y="182" textAnchor="middle" fontSize="132" fontWeight="700" fill="#eae8e6" className="font-['Barlow_Condensed','Roboto_Condensed',sans-serif]">
            <tspan fill="#df9a0c">EZ</tspan>RV
          </text>
          <rect x="56" y="201" width="170" height="9" rx="4.500" fill="#df9a0c" />
        </svg>
      </button>

      <div className="absolute bottom-6 left-1/2 h-[15px] w-[472px] -translate-x-1/2 rounded-full bg-gradient-to-b from-black/70 to-black/50" />
    </main>
  );
}
